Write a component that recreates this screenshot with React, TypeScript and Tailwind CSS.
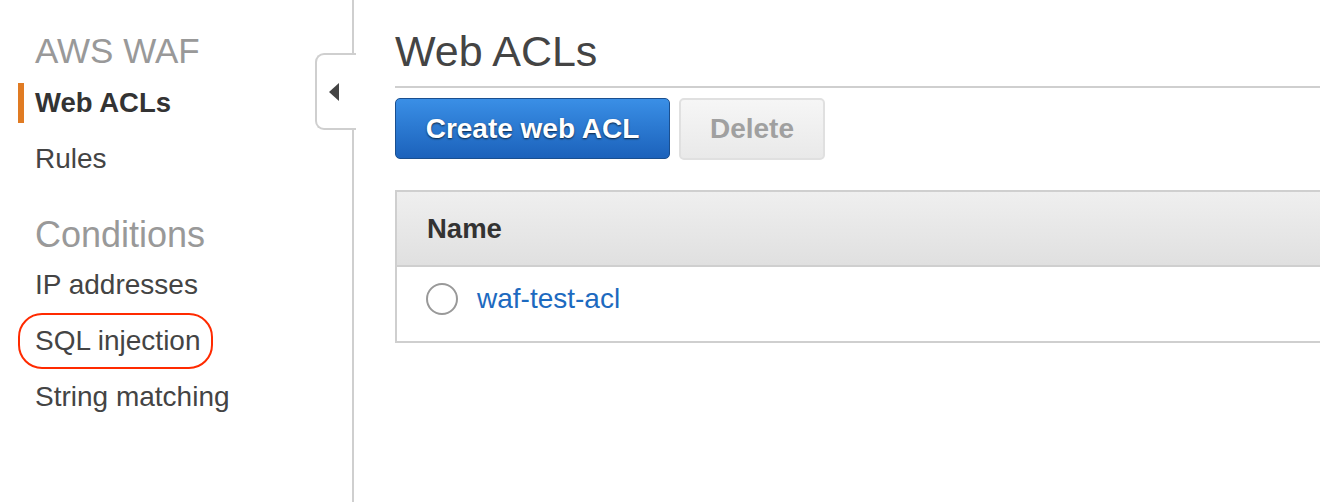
const CONDITIONS = ["IP addresses", "SQL injection", "String matching"];

function Sidebar() {
  return (
    <aside className="relative w-[354px] shrink-0 border-r-2 border-[#cfcfcf] pl-[35px] pt-[31px]">
      <div className="text-[35px] leading-[40px] text-[#999]">AWS WAF</div>

      {/* active item */}
      <div className="mt-[4px] -ml-[17px] flex h-[56px] items-center gap-[11px]">
        <span className="h-[40px] w-[6px] bg-[#e07b23]" />
        <span className="text-[27.5px] font-bold text-[#333]">Web ACLs</span>
      </div>
      <div className="h-[56px] text-[28px] leading-[56px] text-[#444]">Rules</div>

      <div className="mt-[28px] text-[36px] leading-[40px] text-[#999]">Conditions</div>
      <div className="mt-[2px]">
        {CONDITIONS.map((c) => (
          <div key={c} className="relative h-[56px] text-[28px] leading-[56px] text-[#444]">
            {c}
            {c === "SQL injection" && (
              <span className="absolute -left-[17px] top-0 h-[56px] w-[195px] rounded-[24px] border-2 border-[#ff2a00]" />
            )}
          </div>
        ))}
      </div>

      {/* collapse tab */}
      <div className="absolute left-[315px] top-[53px] flex h-[77px] w-[41px] items-center rounded-l-[9px] border-2 border-r-0 border-[#cfcfcf] bg-white pl-[12px]">
        <svg width="10" height="18" viewBox="0 0 10 18">
          <polygon points="10,0 10,18 0,9" fill="#444" />
        </svg>
      </div>
    </aside>
  );
}

export default function App() {
  return (
    <div
      className="flex h-[502px] w-[1320px] overflow-hidden bg-white"
      style={{ fontFamily: '"Liberation Sans", Arial, sans-serif' }}
    >
      <Sidebar />

      <main className="min-w-0 flex-1 pl-[41px] pt-[26px]">
        <div className="border-b-2 border-[#cfcfcf] pb-[10px]">
          <h1 className="text-[43px] leading-[50px] text-[#444]">Web ACLs</h1>
        </div>

        <div className="mt-[10px] flex gap-[9px]">
          <button className="h-[61px] w-[275px] rounded-[5px] border border-[#1a4f8f] bg-gradient-to-b from-[#3a8fe6] to-[#1c62bb] text-[28px] font-bold text-white [text-shadow:0_1px_2px_rgba(0,0,0,0.7)]">
            Create web ACL
          </button>
          <button className="h-[62px] w-[146px] rounded-[5px] border-2 border-[#e0e0e0] bg-gradient-to-b from-[#f6f6f6] to-[#e9e9e9] text-[28px] font-bold text-[#a0a0a0]">
            Delete
          </button>
        </div>

        <div className="mt-[30px] w-[960px] border-2 border-[#cfcfcf]">
          <div className="h-[73px] bg-gradient-to-b from-[#efefef] to-[#e0e0e0] pl-[30px] text-[27.5px] font-bold leading-[73px] text-[#333]">
            Name
          </div>
          <div className="flex items-center gap-[19px] border-t-2 border-[#cfcfcf] pb-[26px] pl-[29px] pt-[16px]">
            <span className="h-[32px] w-[32px] rounded-full border-2 border-[#999] bg-white" />
            <span className="text-[28px] leading-[32px] text-[#1d6ac0]">waf-test-acl</span>
          </div>
        </div>
      </main>
    </div>
  );
}
